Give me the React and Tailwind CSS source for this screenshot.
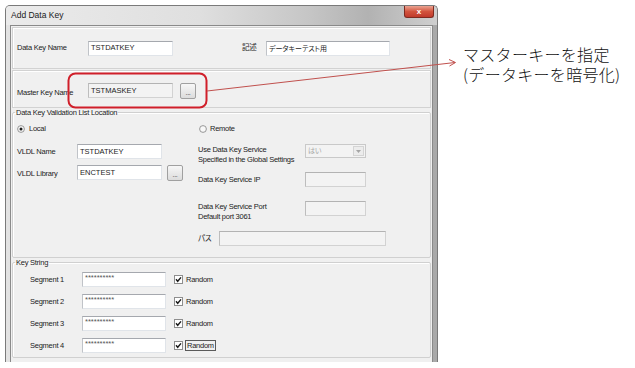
import React from 'react';

const Field = ({ className = '', disabled = false, children }) => (
  <div
    className={
      'h-[15px] shrink-0 flex items-center pl-[2px] border text-[7.5px] leading-none tracking-normal whitespace-nowrap overflow-hidden ' +
      (disabled
        ? 'bg-[#f3f3f3] border-[#d2d2d2] border-t-[#b3b3b3] border-l-[#bdbdbd] '
        : 'bg-white border-[#e0e4e9] border-t-[#a5a8ae] border-l-[#c0c3c8] ') +
      className
    }
  >
    {children}
  </div>
);

const Browse = ({ className = '' }) => (
  <div
    className={
      'w-[16px] h-[16px] shrink-0 rounded-[2px] border border-[#a0a0a0] bg-gradient-to-b from-[#f7f7f7] to-[#dcdcdc] flex items-end justify-center pb-[2px] text-[7px] leading-none text-[#444] ' +
      className
    }
  >
    ...
  </div>
);

const Radio = ({ checked }) => (
  <svg width="8" height="8" viewBox="0 0 8 8" className="shrink-0">
    <circle cx="4" cy="4" r="3.4" fill="#f8f8f8" stroke="#8c8c8c" strokeWidth="0.9" />
    {checked && <circle cx="4" cy="4" r="1.5" fill="#1e1e1e" />}
  </svg>
);

const Check = () => (
  <svg width="9" height="9" viewBox="0 0 9 9" className="shrink-0">
    <rect x="0.5" y="0.5" width="8" height="8" fill="#ffffff" stroke="#8e8e8e" />
    <path d="M2 4.3 L3.7 6.3 L7 2.4" fill="none" stroke="#1a1a1a" strokeWidth="1.4" />
  </svg>
);

const segments = [1, 2, 3, 4];

export default function App() {
  return (
    <div className="relative w-[635px] h-[368px] overflow-hidden bg-white flex items-start font-['Liberation_Sans','Noto_Sans_CJK_JP',sans-serif] text-[#1c1c1c]">
      {/* dialog window */}
      <div className="ml-[5px] mt-[5px] w-[433px] h-[357px] shrink-0 flex flex-col border border-b-0 border-[#7a7a7a] rounded-t-[5px] overflow-hidden bg-gradient-to-r from-[#e3e3e3] via-[#d6d6d6] to-[#a9a9a9]">
        <div className="h-[19px] shrink-0 flex items-start justify-between pl-[5px] pr-[3px] bg-[linear-gradient(to_right,#ebebeb,#dfdfdf_45%,#c6c6c6_70%,#b2b2b2_84%,#cfcfcf)]">
          <span className="mt-[4px] text-[8.5px] leading-[10px] text-[#1a1a1a]">Add Data Key</span>
          <div className="w-[30px] h-[12px] rounded-b-[3px] border border-t-0 border-[#7d2a20] bg-gradient-to-b from-[#e9a392] via-[#d2533d] to-[#c0392b] flex items-center justify-center text-[8px] font-bold leading-none text-white">
            x
          </div>
        </div>

        <div className="flex-1 mx-[4px] border border-b-0 border-[#8a8a8a] bg-[#f0f0f0] flex flex-col px-[1px] pt-[1px] text-[7.5px] tracking-[-0.25px]">
          {/* Data Key Name */}
          <div className="h-[42px] shrink-0 border border-[#d2d2d2] shadow-[inset_1px_1px_0_#ffffff] flex items-center pl-[4px]">
            <span className="w-[71px] shrink-0">Data Key Name</span>
            <Field className="w-[85px]">TSTDATKEY</Field>
            <span className="ml-[69px] w-[24px] shrink-0">記述</span>
            <Field className="w-[124px] text-[7px] [font-feature-settings:'palt']">データキーテスト用</Field>
          </div>

          {/* Master Key Name */}
          <div className="mt-[1px] h-[38px] shrink-0 border border-[#d2d2d2] shadow-[inset_1px_1px_0_#ffffff] flex items-start pt-[12px] pl-[4px]">
            <span className="w-[71px] shrink-0 mt-[4px]">Master Key Name</span>
            <Field disabled className="w-[85px]">TSTMASKEY</Field>
            <Browse className="ml-[7px]" />
          </div>

          {/* Data Key Validation List Location */}
          <fieldset className="shrink-0 border border-[#d0d0d0] rounded-[2px] shadow-[inset_1px_1px_0_#ffffff]">
            <legend className="ml-[2px] px-[1px] leading-[9px]">Data Key Validation List Location</legend>
            <div className="flex pl-[4px] pb-[11px]">
              <div className="w-[181px] shrink-0 flex flex-col">
                <div className="mt-[6px] h-[12px] flex items-center gap-[4px]">
                  <Radio checked />
                  <span>Local</span>
                </div>
                <div className="mt-[9px] flex items-center">
                  <span className="w-[60px] shrink-0">VLDL Name</span>
                  <Field className="w-[85px]">TSTDATKEY</Field>
                </div>
                <div className="mt-[6px] flex items-start">
                  <span className="w-[60px] shrink-0 mt-[3px]">VLDL Library</span>
                  <Field className="w-[85px]">ENCTEST</Field>
                  <Browse className="ml-[5px]" />
                </div>
              </div>

              <div className="flex flex-col">
                <div className="mt-[6px] h-[12px] ml-[1px] flex items-center gap-[3px]">
                  <Radio />
                  <span>Remote</span>
                </div>
                <div className="mt-[9px] flex items-start">
                  <span className="w-[107px] shrink-0 mt-[1px] leading-[10px]">
                    Use Data Key Service
                    <br />
                    Specified in the Global Settings
                  </span>
                  <div className="w-[61px] h-[14px] border border-[#c9c9c9] bg-[#f3f3f3] flex items-center justify-between pl-[2px] pr-[1px]">
                    <span className="text-[7px] text-[#a8a8a8]">はい</span>
                    <div className="w-[11px] h-[10px] border border-[#d4d4d4] bg-[#ececec] flex items-center justify-center">
                      <svg width="5" height="3" viewBox="0 0 5 3">
                        <path d="M0 0 L5 0 L2.5 3 Z" fill="#a5a5a5" />
                      </svg>
                    </div>
                  </div>
                </div>
                <div className="mt-[7px] flex items-center">
                  <span className="w-[107px] shrink-0">Data Key Service IP</span>
                  <Field disabled className="w-[61px]" />
                </div>
                <div className="mt-[14px] flex items-start">
                  <span className="w-[107px] shrink-0 mt-[1px] leading-[10px]">
                    Data Key Service Port
                    <br />
                    Default port 3061
                  </span>
                  <Field disabled className="w-[61px]" />
                </div>
                <div className="mt-[9px] flex items-center">
                  <span className="w-[21px] shrink-0 [font-feature-settings:'palt']">パス</span>
                  <Field disabled className="w-[167px]" />
                </div>
              </div>
            </div>
          </fieldset>

          {/* Key String */}
          <fieldset className="shrink-0 border border-[#d0d0d0] rounded-[2px] shadow-[inset_1px_1px_0_#ffffff]">
            <legend className="ml-[2px] px-[1px] leading-[9px]">Key String</legend>
            <div className="flex flex-col gap-[7px] pt-[5px] pb-[4px] pl-[17px]">
              {segments.map((n) => (
                <div key={n} className="flex items-center">
                  <span className="w-[52px] shrink-0">Segment {n}</span>
                  <Field className="w-[84px] !items-start pt-[1px] text-[4.5px] tracking-[-0.4px] text-[#555]">**********</Field>
                  <div className="ml-[8px]">
                    <Check />
                  </div>
                  <span
                    className={
                      n === 4
                        ? 'ml-[2px] px-[1px] border border-[#5a5a5a] leading-[9px]'
                        : 'ml-[3px] leading-[9px]'
                    }
                  >
                    Random
                  </span>
                </div>
              ))}
            </div>
          </fieldset>
        </div>
      </div>

      {/* annotation text */}
      <div className="ml-[25px] mt-[46px] flex flex-col gap-[4px] font-['Noto_Sans_CJK_JP',sans-serif] font-light text-[16px] leading-[16px] tracking-[0.3px] whitespace-nowrap text-[#111]">
        <span>マスターキーを指定</span>
        <span>(データキーを暗号化)</span>
      </div>

      {/* callout overlay */}
      <svg className="absolute inset-0 pointer-events-none" width="635" height="368" viewBox="0 0 635 368">
        <rect x="68.5" y="73.5" width="138" height="34" rx="7" fill="none" stroke="#d01f2a" strokeWidth="2" />
        <line x1="207" y1="91" x2="455" y2="62.5" stroke="#c0504d" strokeWidth="1" />
        <polyline points="449,59.5 455.5,62.5 449.5,66" fill="none" stroke="#c0504d" strokeWidth="1" />
      </svg>
    </div>
  );
}
